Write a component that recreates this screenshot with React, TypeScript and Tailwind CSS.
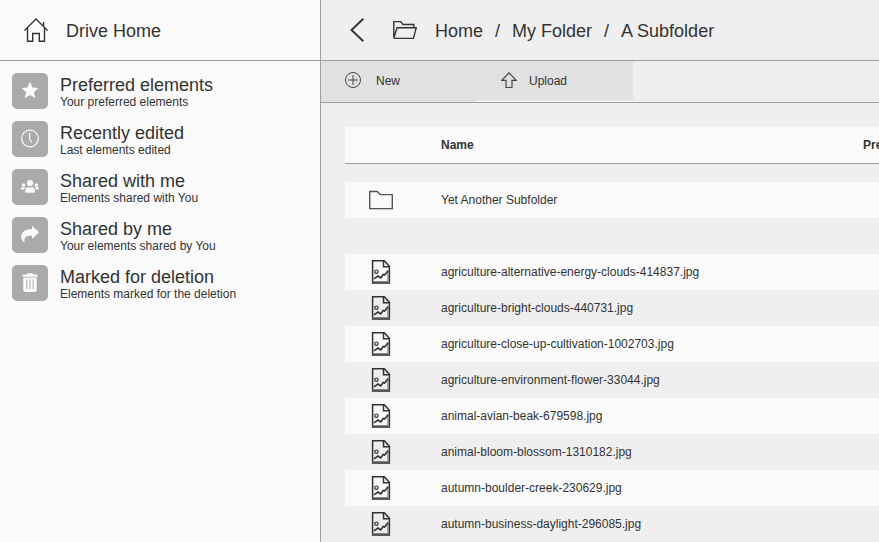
import type { ReactNode } from "react";

const places: { title: string; note: string; icon: ReactNode }[] = [
  {
    title: "Preferred elements",
    note: "Your preferred elements",
    icon: <path fill="#fafafa" d="M18 8.700l2.500 5.800 6 .5-4.600 4 1.500 6.200-5.400-3.200-5.400 3.200 1.500-6.200-4.600-4 6-.5z" />,
  },
  {
    title: "Recently edited",
    note: "Last elements edited",
    icon: (
      <g fill="none" stroke="#fafafa" strokeWidth="1.200">
        <circle cx="18" cy="17.500" r="8.400" />
        <path d="M17.600 12v6l2.300 3.300" />
      </g>
    ),
  },
  {
    title: "Shared with me",
    note: "Elements shared with You",
    icon: (
      <g fill="#fafafa">
        <circle cx="18" cy="14" r="3.100" />
        <circle cx="11.600" cy="16" r="1.800" />
        <circle cx="24.400" cy="16" r="1.800" />
        <path d="M13 22.400c0-3 1.800-4.400 3-4.400 1.200.7 2.800.7 4 0 1.200 0 3 1.400 3 4.400 0 .9-.6 1.400-1.500 1.400h-7c-.9 0-1.500-.5-1.500-1.400zM9 19.800c0-1.200.7-1.800 1.500-1.800.7.4 1.500.4 2.200 0l.7.2c-.7.5-1.200 1.200-1.400 2.300H9.900c-.6 0-.9-.3-.9-.7zM27 19.800c0-1.200-.7-1.800-1.500-1.800-.7.4-1.500.4-2.200 0l-.7.2c.7.5 1.200 1.200 1.400 2.300h2.100c.6 0 .9-.3.9-.7z" />
      </g>
    ),
  },
  {
    title: "Shared by me",
    note: "Your elements shared by You",
    icon: <path fill="#fafafa" d="M20 8.800l7.200 6.500-7.200 6.700v-3.300c-4-.6-7 1.200-7.500 3.500-.3 1.400 0 2.600.5 3.800-2.500-1.600-4.200-4.200-3.900-7.200.5-3.800 4.700-7 10.900-6.800z" />,
  },
  {
    title: "Marked for deletion",
    note: "Elements marked for the deletion",
    icon: (
      <g>
        <path fill="#fafafa" d="M15 9.500V9c0-.5.3-.8.8-.8h4.400c.5 0 .8.3.8.8v.5h4c.3 0 .5.2.5.5v1.800h-15V10c0-.3.2-.5.5-.500zM11.300 12.600h13.400V25c0 1.200-.8 2-2 2h-9.400c-1.200 0-2-.8-2-2z" />
        <path fill="none" stroke="#aaa" d="M14.800 14.500v9.500M18 14.500v9.500M21.200 14.500v9.500" />
      </g>
    ),
  },
];

const files = [
  "agriculture-alternative-energy-clouds-414837.jpg",
  "agriculture-bright-clouds-440731.jpg",
  "agriculture-close-up-cultivation-1002703.jpg",
  "agriculture-environment-flower-33044.jpg",
  "animal-avian-beak-679598.jpg",
  "animal-bloom-blossom-1310182.jpg",
  "autumn-boulder-creek-230629.jpg",
  "autumn-business-daylight-296085.jpg",
];

function HomeIcon() {
  return (
    <svg className="size-6 shrink-0" viewBox="0 0 24 24" fill="none" stroke="#333" strokeWidth="1.400">
      <path d="M.4 12.600L12 1l11.600 11.600M19.600 8.500V4M3.500 10v13.300h5.200v-7.800h6.600v7.800h5.200V10" />
    </svg>
  );
}

function OpenFolderIcon() {
  return (
    <svg className="size-6 shrink-0" viewBox="0 0 24 24" fill="none" stroke="#333" strokeWidth="1.400">
      <path d="M.8 20.300V3.600h6.800l2.500 2.900h10.700v3M.8 20.300L4 9.700h19.200l-2.800 10.700H.8" />
    </svg>
  );
}

function FolderIcon() {
  return (
    <svg className="h-6 w-6" viewBox="0 0 24 24" fill="none" stroke="#555" strokeWidth="1.400">
      <path d="M.7 3.500h7.500l3 3.100h12.100v14H.7z" />
    </svg>
  );
}

function PictureFileIcon() {
  return (
    <svg className="h-6 w-6" viewBox="0 0 24 24" fill="none" stroke="#333">
      <path strokeWidth="1.500" d="M3.600.7h11.600l5.200 5.500v16.800H3.600z" />
      <path strokeWidth="1.500" d="M14.500.8v5.900h6" />
      <path strokeWidth="2.200" stroke="#555" d="M3 22.400h18" />
      <path strokeWidth="1.500" stroke="#888" d="M19 11v10.500" />
      <circle cx="7.400" cy="11.700" r="1.700" strokeWidth="1.200" />
      <path strokeWidth="1.600" d="M5 18.800l3.900-2.800 2.800 2 2.500-3.500 1.500.500 3.500-4.500" />
    </svg>
  );
}

export default function App() {
  return (
    <div className="flex h-[542px] w-[879px] overflow-hidden bg-[#efefef] font-['Liberation_Sans',Arial,sans-serif] text-[12px] leading-[14px] text-[#333]">
      <aside className="w-[321px] shrink-0 border-r border-[#a0a0a0] bg-[#fafafa]">
        <header className="flex h-[61px] items-center gap-[18px] border-b border-[#a0a0a0] pl-6 text-[18px] leading-[22px]">
          <HomeIcon />
          <h1 className="pt-[2px]">Drive Home</h1>
        </header>
        <nav className="flex flex-col gap-3 px-3 pt-3">
          {places.map(({ title, note, icon }) => (
            <a key={title} className="flex h-9 gap-3">
              <svg className="size-9 shrink-0 rounded-[5px] bg-[#aaa]" viewBox="0 0 36 36">{icon}</svg>
              <span className="flex flex-col pt-px">
                <span className="text-[18px] leading-[22px]">{title}</span>
                <span className="-mt-px">{note}</span>
              </span>
            </a>
          ))}
        </nav>
      </aside>

      <main className="min-w-0 flex-1">
        <header className="flex h-[61px] items-center border-b border-[#a0a0a0] pl-6 text-[18px] leading-[22px]">
          <svg className="size-6 shrink-0" viewBox="0 0 24 24" fill="none" stroke="#333" strokeWidth="1.900">
            <path d="M18.300.7L6.500 12l11.800 11.300" />
          </svg>
          <div className="ml-6 flex"><OpenFolderIcon /></div>
          <div className="ml-[18px] flex gap-3 pt-[2px] whitespace-nowrap">
            <span>Home</span><span>/</span><span>My Folder</span><span>/</span><span>A Subfolder</span>
          </div>
        </header>

        <div className="flex h-[42px] items-start border-b border-[#a0a0a0]">
          <button className="flex h-[41px] w-[156px] items-start gap-[15px] bg-[#e1e1e1] pt-[11px] pl-6">
            <svg className="size-4" viewBox="0 0 16 16" fill="none" stroke="#444">
              <circle cx="8" cy="8" r="7.500" /><path d="M8 3v10M3 8h10" />
            </svg>
            <span className="pt-[2px]">New</span>
          </button>
          <button className="flex h-[39px] w-[156px] items-start gap-3 bg-[#e1e1e1] pt-[11px] pl-6">
            <svg className="size-4" viewBox="0 0 16 16" fill="none" stroke="#444" strokeWidth="1.200">
              <path d="M8 .8L15.200 8.300h-4.200v7.200H5V8.300H.8z" />
            </svg>
            <span className="pt-[2px]">Upload</span>
          </button>
        </div>

        <section className="pt-6 pl-6">
          <div className="flex h-[37px] items-center border-b border-[#a0a0a0] bg-[#fafafa] pl-24 font-bold">
            <span className="w-[422px] shrink-0">Name</span>
            <span className="shrink-0">Preview</span>
          </div>
          <div className="mt-[18px] flex h-9 items-center bg-[#fafafa] pl-6">
            <div className="w-[72px]"><FolderIcon /></div>
            <span>Yet Another Subfolder</span>
          </div>
          <div className="pt-9">
            {files.map((name) => (
              <div key={name} className="flex h-9 items-center pl-6 odd:bg-[#fafafa]">
                <div className="w-[72px]"><PictureFileIcon /></div>
                <span>{name}</span>
              </div>
            ))}
          </div>
        </section>
      </main>
    </div>
  );
}
